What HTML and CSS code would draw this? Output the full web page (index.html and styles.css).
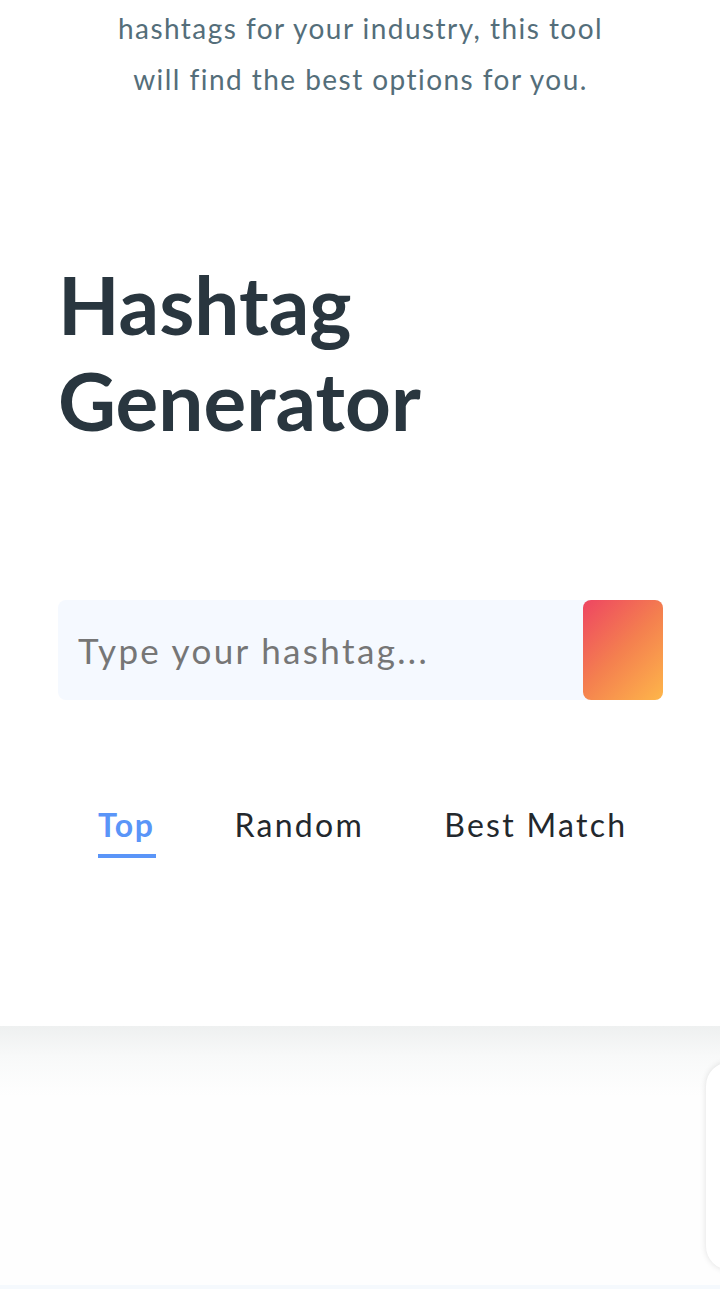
FILE: index.html
```html
<!DOCTYPE html>
<html lang="en">
<head>
<meta charset="utf-8">
<title>Hashtag Generator</title>
<link rel="stylesheet" href="styles.css">
</head>
<body>
<main class="tool">
  <p class="intro"><span class="line">hashtags for your industry, this tool</span><span class="line">will find the best options for you.</span></p>
  <h1 class="title">Hashtag<br>Generator</h1>
  <form class="search">
    <input class="search-input" type="text" placeholder="Type your hashtag...">
    <button class="search-btn" type="button" aria-label="Search"></button>
  </form>
  <nav class="tabs">
    <span class="tab active">Top</span>
    <span class="tab">Random</span>
    <span class="tab">Best Match</span>
  </nav>
</main>
<section class="results">
  <div class="card"></div>
</section>
<div class="bottom-strip"></div>
</body>
</html>
```
FILE: styles.css
```css
* { box-sizing: border-box; }
html, body { margin: 0; padding: 0; background: #fff; }
body {
  font-family: Lato, "Open Sans", "Noto Sans", sans-serif;
  width: 720px;
  height: 1289px;
  overflow: hidden;
}
.tool {
  background: #fff;
  padding: 3px 57px 0 58px;
  height: 1026px;
  position: relative;
  z-index: 1;
}
.intro {
  margin: 0;
  text-align: center;
  color: #546e7a;
  font-size: 28px;
  line-height: 51px;
  letter-spacing: 1.45px;
}
.intro .line { display: block; }
.title {
  margin: 151px 0 0;
  font-size: 80px;
  line-height: 96px;
  font-weight: 700;
  color: #29363f;
  letter-spacing: 0;
}
.search {
  display: flex;
  margin-top: 152px;
  height: 100px;
  background: #f5f9ff;
  border-radius: 8px;
}
.search-input {
  flex: 1;
  min-width: 0;
  border: 0;
  background: transparent;
  font-family: inherit;
  font-size: 35px;
  letter-spacing: 2.35px;
  color: #333;
  padding: 0 20px;
  outline: none;
}
.search-input::placeholder { color: #767676; }
.search-btn {
  width: 80px;
  border: 0;
  border-radius: 8px;
  background: linear-gradient(135deg, #ee4562 0%, #f4804f 50%, #feb64a 100%);
}
.tabs {
  display: flex;
  margin-top: 105px;
}
.tab {
  flex-shrink: 0;
  white-space: nowrap;
  padding: 0 40px;
  font-size: 32px;
  line-height: 40px;
  letter-spacing: 2.3px;
  color: #23282d;
}
.tab.active {
  color: #5a95f8;
  font-weight: 700;
  letter-spacing: 1.5px;
}
.tab.active::after {
  content: "";
  display: block;
  height: 4px;
  margin-top: 9px;
  margin-right: -1.5px;
  background: #5a95f8;
}
.results {
  height: 259px;
  background: linear-gradient(#eef0f0 0, #f8f9f9 30px, #fefefe 70px, #fefefe 100%);
  position: relative;
  overflow: hidden;
  padding-top: 36px;
}
.card {
  margin-left: 706px;
  width: 200px;
  height: 208px;
  background: #fff;
  border-radius: 24px;
  box-shadow: 0 0 6px rgba(0,0,0,0.12);
}
.bottom-strip {
  height: 4px;
  background: #f5f9fd;
}
```
